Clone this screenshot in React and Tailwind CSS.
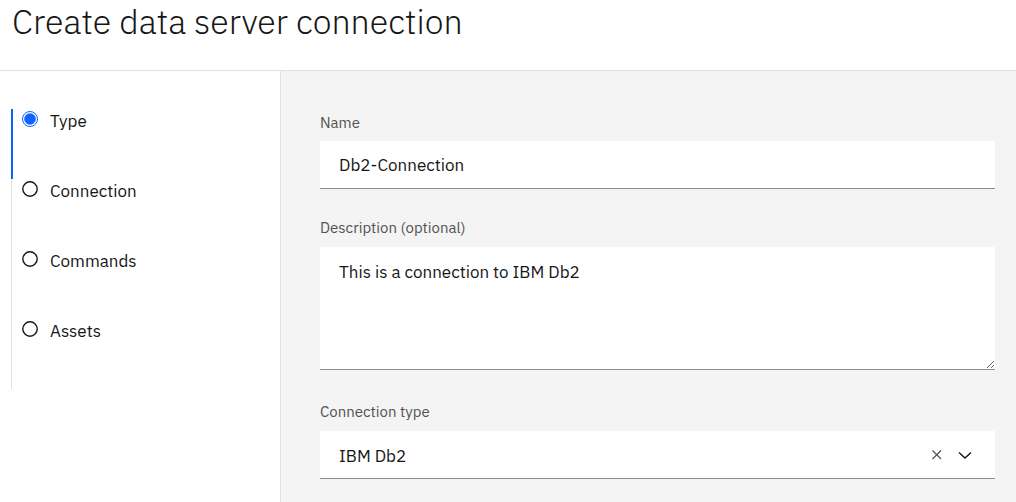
import React from "react";

const font = { fontFamily: '"IBM Plex Sans", "Noto Sans", "Liberation Sans", sans-serif' };

function CurrentIcon() {
  return (
    <svg width="16" height="16" viewBox="0 0 16 16" className="shrink-0">
      <circle cx="8" cy="8" r="7.5" fill="none" stroke="#0f62fe" strokeWidth="1" />
      <circle cx="8" cy="8" r="5.8" fill="#0f62fe" />
    </svg>
  );
}

function EmptyIcon() {
  return (
    <svg width="16" height="16" viewBox="0 0 16 16" className="shrink-0">
      <circle cx="8" cy="8" r="7.2" fill="none" stroke="#161616" strokeWidth="1.4" />
    </svg>
  );
}

function Step({ label, current }) {
  return (
    <div
      className={
        current
          ? "h-[70px] flex items-start border-l-2 border-[#0f62fe] pl-[9px]"
          : "h-[70px] flex items-start border-l border-[#e0e0e0] pl-[10px]"
      }
    >
      <div className="mt-[2px]">{current ? <CurrentIcon /> : <EmptyIcon />}</div>
      <span className="ml-[12px] text-[17px] leading-[25px] text-[#161616]">{label}</span>
    </div>
  );
}

export default function App() {
  return (
    <div className="w-[1016px] h-[502px] bg-white overflow-hidden" style={font}>
      <div className="h-[71px] border-b border-[#e0e0e0] pl-[12px]">
        <h1 className="text-[34px] leading-[40px] pt-[1px] text-[#161616] font-light">
          Create data server connection
        </h1>
      </div>
      <div className="flex h-[431px]">
        <div className="w-[281px] shrink-0 border-r border-[#e0e0e0] pl-[11px] pt-[38px]">
          <Step label="Type" current />
          <Step label="Connection" />
          <Step label="Commands" />
          <Step label="Assets" />
        </div>
        <div className="flex-1 bg-[#f4f4f4] pl-[39px] pr-[21px] pt-[43px]">
          <label className="block text-[15px] leading-[18px] text-[#525252] mb-[9px]">Name</label>
          <input
            readOnly
            defaultValue="Db2-Connection"
            className="block w-full h-[48px] bg-white border-b border-[#8d8d8d] pl-[19px] text-[17px] text-[#161616] outline-none"
            style={font}
          />
          <label className="block text-[15px] leading-[18px] text-[#525252] mt-[30px] mb-[10px]">
            Description (optional)
          </label>
          <textarea
            readOnly
            defaultValue="This is a connection to IBM Db2"
            className="block w-full h-[123px] bg-white border-b border-[#8d8d8d] pl-[19px] pt-[13px] text-[17px] leading-[24px] text-[#161616] outline-none"
            style={font}
          />
          <label className="block text-[15px] leading-[18px] text-[#525252] mt-[33px] mb-[10px]">
            Connection type
          </label>
          <div className="flex items-center w-full h-[48px] bg-white border-b border-[#8d8d8d] pl-[19px] pr-[22px]">
            <span className="flex-1 text-[17px] leading-[24px] pt-[2px] text-[#161616]">IBM Db2</span>
            <svg width="16" height="16" viewBox="0 0 16 16" className="mr-[12px]">
              <path d="M3.5 3.5 L12 12 M12 3.5 L3.5 12" stroke="#525252" strokeWidth="1.2" fill="none" />
            </svg>
            <svg width="16" height="16" viewBox="0 0 16 16">
              <path d="M2 5.5 L8 11 L14 5.5" stroke="#161616" strokeWidth="1.4" fill="none" />
            </svg>
          </div>
        </div>
      </div>
    </div>
  );
}
